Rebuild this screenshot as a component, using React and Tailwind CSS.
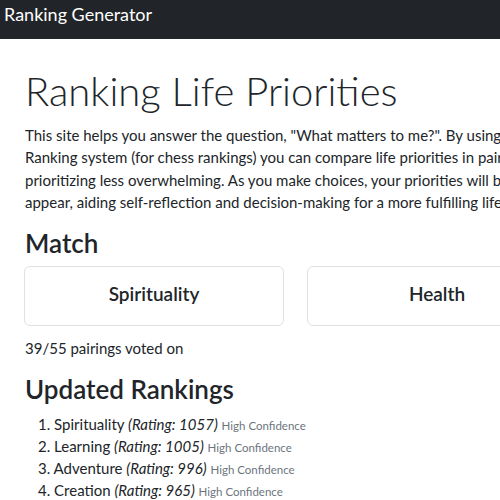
const rankings = [
  { name: 'Spirituality', rating: 1057 },
  { name: 'Learning', rating: 1005 },
  { name: 'Adventure', rating: 996 },
  { name: 'Creation', rating: 965 },
];

const App = () => {
  return (
    <div className="w-[500px] h-[500px] overflow-hidden bg-white text-[#212529] font-['Lato',sans-serif]">
      {/* top bar */}
      <nav className="h-[39px] bg-[#212529] flex items-center px-[4px] pb-[11px]">
        <span className="text-white text-[18px] leading-none">Ranking Generator</span>
      </nav>

      <main className="pl-[25px] pt-[27px]">
        <h1 className="text-[40px] font-light leading-[50px] whitespace-nowrap">Ranking Life Priorities</h1>

        <div className="mt-[8px] text-[15px] leading-[22.3px] whitespace-nowrap">
          <p>This site helps you answer the question, "What matters to me?". By using the Elo</p>
          <p>Ranking system (for chess rankings) you can compare life priorities in pairs, making</p>
          <p>prioritizing less overwhelming. As you make choices, your priorities will be ranked</p>
          <p>appear, aiding self-reflection and decision-making for a more fulfilling life.</p>
        </div>

        <h2 className="mt-[15px] text-[26px] font-semibold leading-[30px]">Match</h2>

        {/* the two choices */}
        <div className="mt-[8px] flex gap-[23px] -ml-px">
          <button className="w-[260px] h-[60px] shrink-0 pb-[4px] border border-[#dee2e6] rounded-[6px] bg-white text-[19px] font-semibold">
            Spirituality
          </button>
          <button className="w-[260px] h-[60px] shrink-0 pb-[4px] border border-[#dee2e6] rounded-[6px] bg-white text-[19px] font-semibold">
            Health
          </button>
        </div>

        <p className="mt-[11px] text-[15px] leading-[22px]">39/55 pairings voted on</p>

        <h2 className="mt-[15px] text-[26px] font-semibold leading-[30px]">Updated Rankings</h2>

        <ol className="mt-[9px] pl-[13px] text-[15px] leading-[22px]">
          {rankings.map((r, i) => (
            <li key={r.name}>
              {i + 1}. {r.name} <em>(Rating: {r.rating})</em>{' '}
              <span className="text-[11.5px] leading-none text-[#6c757d]">High Confidence</span>
            </li>
          ))}
        </ol>
      </main>
    </div>
  );
};

export default App;
